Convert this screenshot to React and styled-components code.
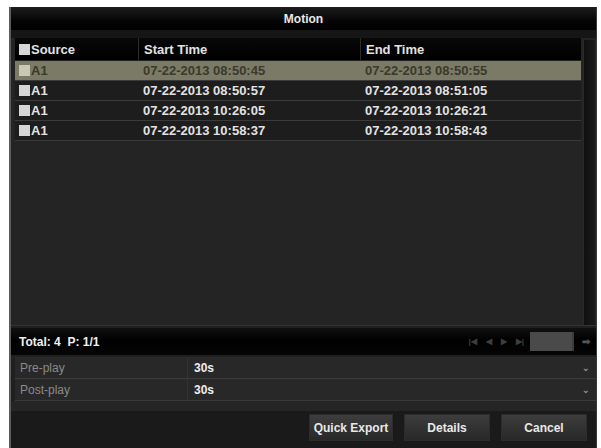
import React from 'react';
import styled, { createGlobalStyle } from 'styled-components';

const Global = createGlobalStyle`
  html, body {
    margin: 0;
    background: #fff;
  }
  body {
    font-family: "Liberation Sans", Arial, sans-serif;
  }
`;

const Panel = styled.main`
  margin: 7px 4px 0 9px;
  height: 441px;
  background: #1f1f1f;
  border-left: 2px solid #5c5c5c;
  border-right: 1px solid #3a3a3a;
  display: flex;
  flex-direction: column;
  overflow: hidden;
`;

const TitleBar = styled.header`
  height: 23px;
  flex: none;
  display: flex;
  align-items: center;
  justify-content: center;
  background: linear-gradient(#1d1d1d, #050505 60%, #000);
  color: #e8e8e8;
  font-size: 12px;
  font-weight: bold;
`;

const Band = styled.div`
  height: ${p => p.h}px;
  flex: none;
  background: ${p => p.bg || '#161616'};
`;

const TableArea = styled.section`
  height: 287px;
  flex: none;
  display: flex;
  padding-left: 4px;
  background: #242424;
  border-bottom: 1px solid #343434;
`;

const Table = styled.div`
  flex: 1;
  display: flex;
  flex-direction: column;
`;

const Row = styled.div`
  display: grid;
  grid-template-columns: 123px 222px 1fr;
  height: ${p => (p.head ? 22 : 19)}px;
  align-items: center;
  font-size: 13px;
  font-weight: bold;
  color: ${p => (p.selected ? '#3a392b' : '#e2e2e2')};
  background: ${p =>
    p.head ? 'linear-gradient(#080808, #000)' : p.selected ? '#7b7a66' : '#1d1d1d'};
  border-bottom: 1px solid ${p => (p.head ? '#222' : '#3a3a3a')};
`;

const Cell = styled.div`
  display: flex;
  align-items: center;
  height: 100%;
  padding-left: ${p => (p.first ? 4 : 5)}px;
  border-left: ${p => (p.head && !p.first ? '1px solid #2c2c2c' : 'none')};
  white-space: nowrap;
`;

const Check = styled.span`
  width: 11px;
  height: 11px;
  margin-right: 1px;
  background: ${p => (p.selected ? '#c9c8b6' : '#d6d6d6')};
  flex: none;
`;

const Scroll = styled.div`
  width: 11px;
  margin: 2px 1px 0 2px;
  background: linear-gradient(90deg, #101010, #1a1a1a);
  border-left: 1px solid #2a2a2a;
`;

const TotalBar = styled.div`
  height: 27px;
  flex: none;
  margin-top: 2px;
  display: flex;
  align-items: center;
  padding: 0 6px 0 8px;
  background: linear-gradient(#111, #000 45%, #050505);
  color: #f0f0f0;
  font-size: 12px;
  font-weight: bold;
`;

const Total = styled.span`
  flex: 1;
`;

const Pager = styled.div`
  display: flex;
  align-items: center;
  gap: 9px;
  color: #3e3e3e;
  font-size: 8px;
`;

const PageBox = styled.div`
  width: 42px;
  height: 19px;
  margin-left: 6px;
  background: #4a4a4a;
  border-right: 2px solid #3c3c3c;
`;

const Go = styled.span`
  margin-left: 8px;
  color: #555;
  font-size: 10px;
`;

const Settings = styled.div`
  margin-top: 2px;
  display: flex;
  flex-direction: column;
  padding-left: 4px;
`;

const SetRow = styled.div`
  height: 20px;
  display: grid;
  grid-template-columns: 173px 1fr 14px;
  align-items: center;
  background: #282828;
  border-bottom: 1px solid #3a3a3a;
  border-top: 1px solid #2c2c2c;
  font-size: 12px;
`;

const Label = styled.span`
  padding-left: 5px;
  color: #8a8a8a;
  border-right: 1px solid #333;
  height: 100%;
  display: flex;
  align-items: center;
`;

const Value = styled.span`
  padding-left: 6px;
  color: #eee;
  font-weight: bold;
`;

const Caret = styled.span`
  color: #8c8c8c;
  font-size: 9px;
  font-weight: bold;
`;

const Footer = styled.footer`
  flex: 1;
  display: flex;
  justify-content: flex-end;
  align-items: flex-start;
  gap: 11px;
  padding: 3px 9px 0 0;
  background: #1b1a1a;
`;

const Button = styled.button`
  width: ${p => p.w}px;
  height: 27px;
  border: 1px solid #2c2c2c;
  background: linear-gradient(#3d3d3d, #282828);
  color: #e8e8e8;
  font-family: inherit;
  font-size: 12px;
  font-weight: bold;
  padding: 0;
`;

const records = [
  ['07-22-2013 08:50:45', '07-22-2013 08:50:55'],
  ['07-22-2013 08:50:57', '07-22-2013 08:51:05'],
  ['07-22-2013 10:26:05', '07-22-2013 10:26:21'],
  ['07-22-2013 10:58:37', '07-22-2013 10:58:43'],
];

export default function App() {
  return (
    <>
      <Global />
      <Panel>
        <TitleBar>Motion</TitleBar>
        <Band h={8} />
        <TableArea>
          <Table>
            <Row head>
              <Cell head first>
                <Check />Source
              </Cell>
              <Cell head>Start Time</Cell>
              <Cell head>End Time</Cell>
            </Row>
            {records.map(([start, end], i) => (
              <Row key={i} selected={i === 0}>
                <Cell first>
                  <Check selected={i === 0} />A1
                </Cell>
                <Cell>{start}</Cell>
                <Cell>{end}</Cell>
              </Row>
            ))}
          </Table>
          <Scroll />
        </TableArea>
        <TotalBar>
          <Total>Total: 4&nbsp; P: 1/1</Total>
          <Pager>
            <span>|◀</span>
            <span>◀</span>
            <span>▶</span>
            <span>▶|</span>
          </Pager>
          <PageBox />
          <Go>➡</Go>
        </TotalBar>
        <Settings>
          <SetRow>
            <Label>Pre-play</Label>
            <Value>30s</Value>
            <Caret>⌄</Caret>
          </SetRow>
          <SetRow>
            <Label>Post-play</Label>
            <Value>30s</Value>
            <Caret>⌄</Caret>
          </SetRow>
        </Settings>
        <Band h={10} bg="#252525" />
        <Footer>
          <Button w={84}>Quick Export</Button>
          <Button w={86}>Details</Button>
          <Button w={86}>Cancel</Button>
        </Footer>
      </Panel>
    </>
  );
}
